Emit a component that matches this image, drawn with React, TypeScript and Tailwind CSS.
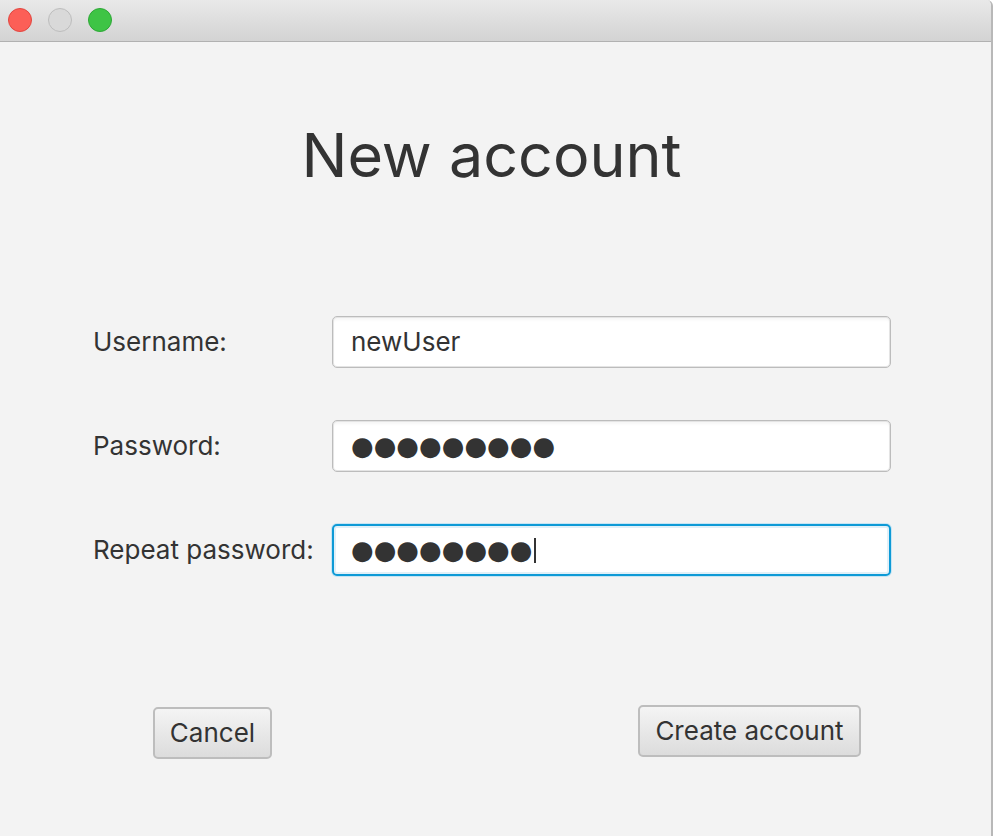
import React from "react";

const font = { fontFamily: 'Inter, "Liberation Sans", sans-serif' };

function Field({ children, focused }: { children: React.ReactNode; focused?: boolean }) {
  return (
    <div
      className={
        focused
          ? "h-[52px] w-[559px] rounded-[5px] border-2 border-[#0e9ad6] bg-white flex items-center pl-[17px] shadow-[0_0_0_1px_#c6e5f4,inset_0_0_0_2px_#e1f0f8]"
          : "h-[52px] w-[559px] rounded-[5px] border border-[#bcbcbc] bg-white flex items-center pl-[18px] shadow-[inset_0_0_0_1px_#e4e4e4,inset_0_3px_3px_rgba(0,0,0,0.04)]"
      }
    >
      {children}
    </div>
  );
}

function Dots({ n }: { n: number }) {
  return (
    <span
      className="text-[#333333] text-[26px] leading-none tracking-[0px]"
      style={{ fontFamily: '"DejaVu Sans", sans-serif' }}
    >
      {"●".repeat(n)}
    </span>
  );
}

export default function App() {
  return (
    <div className="w-[994px] h-[836px] bg-white text-[#333333]" style={font}>
      <div className="w-[993px] h-[836px] flex flex-col border-r-2 border-[#b8b8b8] rounded-tr-[6px] overflow-hidden bg-[#f3f3f3]">
        {/* title bar */}
        <div className="h-[42px] shrink-0 flex items-center gap-[16px] pl-[8px] pb-[2px] bg-gradient-to-b from-[#e9e9e9] to-[#d3d3d3] border-b border-[#b1b1b1]">
          <div className="w-[24px] h-[24px] rounded-full bg-[#fc5f57] border border-[#e2463f]" />
          <div className="w-[24px] h-[24px] rounded-full bg-[#d9d9d9] border border-[#bdbdbd]" />
          <div className="w-[24px] h-[24px] rounded-full bg-[#3ec445] border border-[#2da836]" />
        </div>

        {/* content */}
        <div className="flex flex-col items-center pt-[77px] pr-[8px]">
          <h1 className="text-[61px] leading-[72px] font-normal text-[#333333]">New account</h1>
        </div>

        <div className="mt-[125px] flex flex-col gap-[52px] pl-[93px]">
          <div className="flex items-center">
            <span className="w-[239px] text-[26px] leading-none">Username:</span>
            <Field>
              <span className="text-[26px] leading-none">newUser</span>
            </Field>
          </div>
          <div className="flex items-center">
            <span className="w-[239px] text-[26px] leading-none">Password:</span>
            <Field>
              <Dots n={9} />
            </Field>
          </div>
          <div className="flex items-center">
            <span className="w-[239px] text-[26px] leading-none">Repeat password:</span>
            <Field focused>
              <Dots n={8} />
              <span className="ml-[1px] w-[2px] h-[25px] bg-[#333333]" />
            </Field>
          </div>
        </div>

        <div className="mt-[129px] flex items-start">
          <button className="ml-[153px] mt-[2px] w-[119px] h-[52px] rounded-[5px] border-2 border-[#bdbdbd] bg-gradient-to-b from-[#f4f4f4] to-[#dcdcdc] text-[26px] text-[#333333] leading-none">
            Cancel
          </button>
          <button className="ml-[366px] w-[223px] h-[52px] rounded-[5px] border-2 border-[#bdbdbd] bg-gradient-to-b from-[#f4f4f4] to-[#dcdcdc] text-[26px] text-[#333333] leading-none">
            Create account
          </button>
        </div>
      </div>
    </div>
  );
}
